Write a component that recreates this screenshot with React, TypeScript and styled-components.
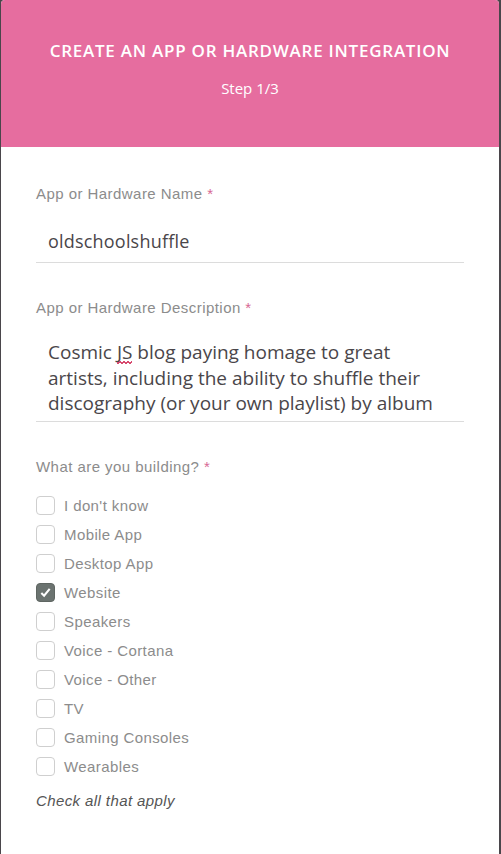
import React from "react";
import styled, { createGlobalStyle } from "styled-components";

const Global = createGlobalStyle`
  html, body { margin: 0; padding: 0; background: #4a464b; }
  body { width: 501px; height: 854px; overflow: hidden; }
  * { box-sizing: border-box; }
`;

const Page = styled.div`
  display: flex;
  padding-left: 1px;
  width: 501px;
  height: 854px;
`;

const Card = styled.div`
  width: 498px;
  height: 854px;
  background: #ffffff;
  border-radius: 4px 4px 0 0;
  overflow: hidden;
  display: flex;
  flex-direction: column;
`;

const Header = styled.header`
  height: 147px;
  background: #e66d9f;
  color: #ffffff;
  display: flex;
  flex-direction: column;
  align-items: center;
  padding-top: 40px;
  gap: 17px;
`;

const Title = styled.h1`
  margin: 0;
  font-family: "Open Sans", Lato, sans-serif;
  font-weight: 600;
  font-size: 17px;
  letter-spacing: 0.75px;
  line-height: 22px;
`;

const Step = styled.div`
  font-family: "Open Sans", Lato, sans-serif;
  font-size: 15px;
  line-height: 18px;
`;

const Form = styled.form`
  display: flex;
  flex-direction: column;
  padding: 38px 35px 0 35px;
`;

const Field = styled.div`
  display: flex;
  flex-direction: column;
  margin-bottom: 36px;
`;

const Label = styled.label`
  font-family: "Liberation Sans", Arial, sans-serif;
  font-size: 15px;
  letter-spacing: 0.45px;
  line-height: 18px;
  color: #8c8c8c;
`;

const Req = styled.span`
  color: #d76894;
`;

const Input = styled.div`
  font-family: "Open Sans", Lato, sans-serif;
  font-size: 18px;
  letter-spacing: 0.2px;
  line-height: 24px;
  color: #4a464a;
  padding: 26px 12px 9px 12px;
  border-bottom: 1px solid #dcdcdc;
`;

const TextArea = styled.div`
  font-family: "Open Sans", Lato, sans-serif;
  font-size: 19px;
  line-height: 25.5px;
  color: #4a464a;
  padding: 23px 12px 4px 12px;
  border-bottom: 1px solid #dcdcdc;
`;

const Squiggle = styled.span`
  position: relative;
  &::after {
    content: "";
    position: absolute;
    left: 0;
    right: 0;
    bottom: 1px;
    height: 3px;
    background:
      linear-gradient(135deg, transparent 35%, #d7496e 35%, #d7496e 60%, transparent 60%) 0 0 / 4px 3px repeat-x,
      linear-gradient(45deg, transparent 35%, #d7496e 35%, #d7496e 60%, transparent 60%) 2px 0 / 4px 3px repeat-x;
  }
`;

const List = styled.div`
  display: flex;
  flex-direction: column;
  gap: 9px;
  padding-top: 20px;
`;

const Row = styled.div`
  display: flex;
  align-items: center;
  gap: 9px;
  height: 20px;
`;

const Box = styled.span<{ $checked?: boolean }>`
  width: 19px;
  height: 19px;
  border-radius: 4px;
  border: 1px solid ${(p) => (p.$checked ? "#5f6662" : "#cfcfcf")};
  background: ${(p) => (p.$checked ? "#6b7370" : "#ffffff")};
  display: flex;
  align-items: center;
  justify-content: center;
`;

const OptionText = styled.span`
  font-family: "Liberation Sans", Arial, sans-serif;
  font-size: 15px;
  letter-spacing: 0.4px;
  color: #8c8c8c;
`;

const Hint = styled.div`
  font-family: "Liberation Sans", Arial, sans-serif;
  font-style: italic;
  font-size: 15px;
  letter-spacing: 0.4px;
  line-height: 18px;
  color: #555555;
  margin-top: 15px;
`;

const options = [
  "I don't know",
  "Mobile App",
  "Desktop App",
  "Website",
  "Speakers",
  "Voice - Cortana",
  "Voice - Other",
  "TV",
  "Gaming Consoles",
  "Wearables",
];

export default function App() {
  return (
    <>
      <Global />
      <Page>
        <Card>
          <Header>
            <Title>CREATE AN APP OR HARDWARE INTEGRATION</Title>
            <Step>Step 1/3</Step>
          </Header>
          <Form>
            <Field>
              <Label>
                App or Hardware Name <Req>*</Req>
              </Label>
              <Input>oldschoolshuffle</Input>
            </Field>
            <Field>
              <Label>
                App or Hardware Description <Req>*</Req>
              </Label>
              <TextArea>
                Cosmic <Squiggle>JS</Squiggle> blog paying homage to great
                artists, including the ability to shuffle their discography
                (or your own playlist) by album
              </TextArea>
            </Field>
            <div>
              <Label>
                What are you building? <Req>*</Req>
              </Label>
              <List>
                {options.map((o) => (
                  <Row key={o}>
                    <Box $checked={o === "Website"}>
                      {o === "Website" && (
                        <svg width="13" height="13" viewBox="0 0 14 14">
                          <path
                            d="M2.5 7.5 L5.5 10.5 L11.5 3"
                            fill="none"
                            stroke="#ffffff"
                            strokeWidth="2.2"
                          />
                        </svg>
                      )}
                    </Box>
                    <OptionText>{o}</OptionText>
                  </Row>
                ))}
              </List>
              <Hint>Check all that apply</Hint>
            </div>
          </Form>
        </Card>
      </Page>
    </>
  );
}
